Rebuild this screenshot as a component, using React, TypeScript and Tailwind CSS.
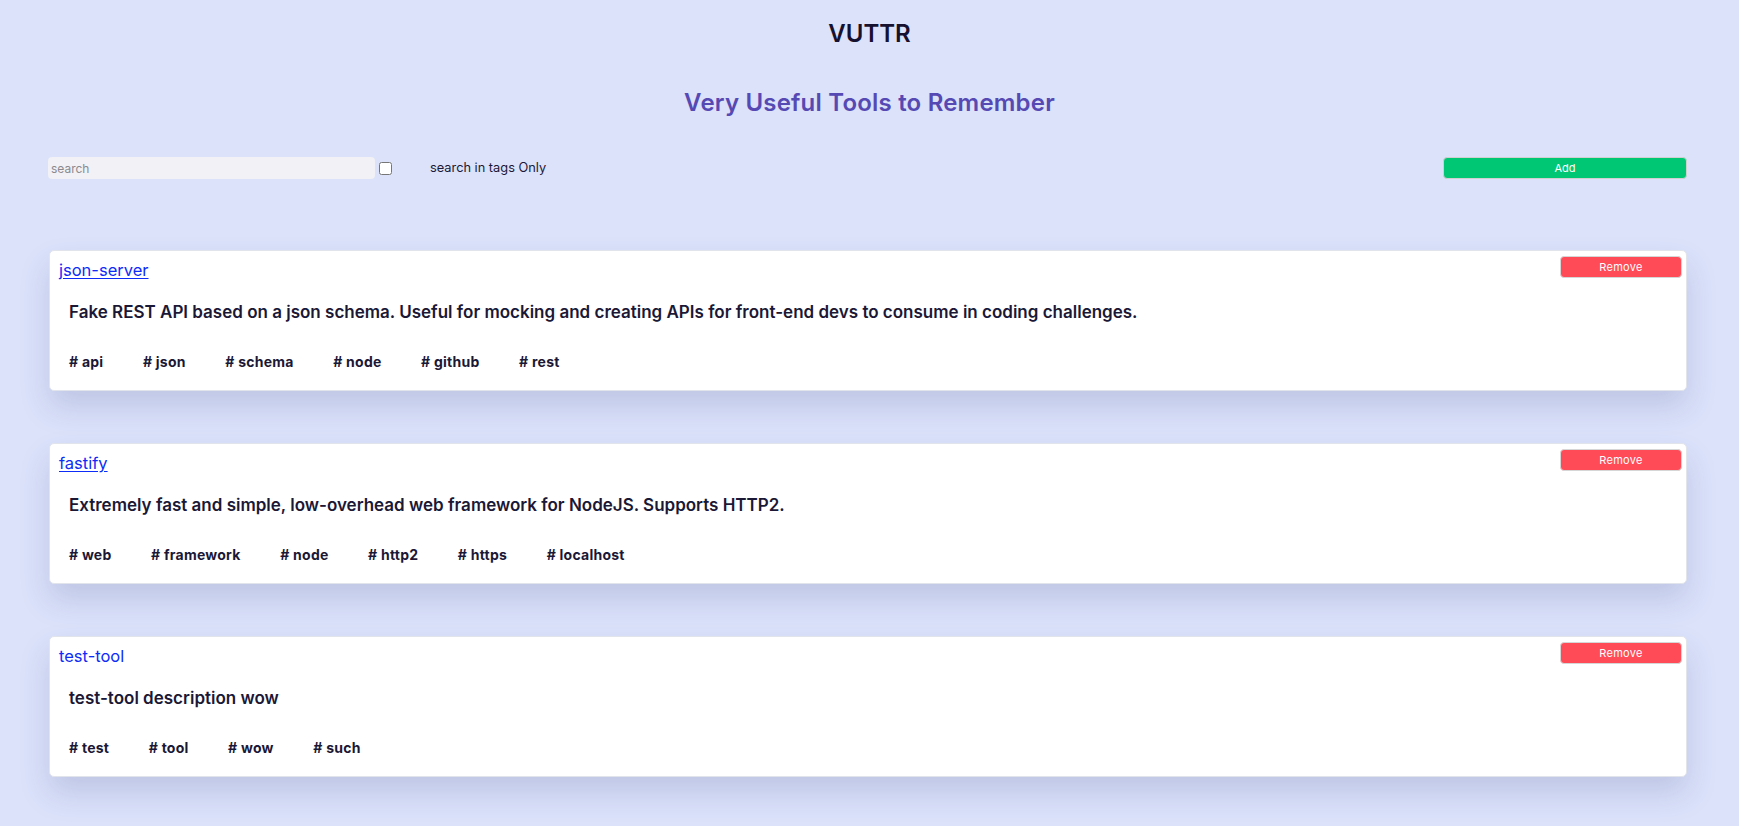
import React from "react";

type Tool = { title: string; underline: boolean; description: string; tags: string[] };

const tools: Tool[] = [
  {
    title: "json-server",
    underline: true,
    description:
      "Fake REST API based on a json schema. Useful for mocking and creating APIs for front-end devs to consume in coding challenges.",
    tags: ["api", "json", "schema", "node", "github", "rest"],
  },
  {
    title: "fastify",
    underline: true,
    description: "Extremely fast and simple, low-overhead web framework for NodeJS. Supports HTTP2.",
    tags: ["web", "framework", "node", "http2", "https", "localhost"],
  },
  {
    title: "test-tool",
    underline: false,
    description: "test-tool description wow",
    tags: ["test", "tool", "wow", "such"],
  },
];

function Card({ tool }: { tool: Tool }) {
  return (
    <div className="h-[141px] bg-white border border-[#e2e4ec] rounded-[5px] shadow-[0_16px_30px_rgba(50,60,130,0.17)] pt-[5px] pl-[9px] pr-[4px]">
      <div className="flex justify-between items-start">
        <a
          href="#"
          className={
            "mt-[4px] text-[16.5px] leading-[20px] text-[#0d2cf7] underline-offset-[2px] " +
            (tool.underline ? "underline" : "no-underline")
          }
        >
          {tool.title}
        </a>
        <button className="w-[122px] h-[22px] bg-[#ff4a57] border border-[#d6d6d6] rounded-[4px] text-white text-[11px] tracking-[0.3px] leading-none">
          Remove
        </button>
      </div>
      <p className="mt-[20px] ml-[10px] text-[17px] leading-[24px] font-semibold text-[#1b1836]">
        {tool.description}
      </p>
      <div className="mt-[28px] ml-[10px] flex gap-[39.5px] text-[14px] tracking-[0.25px] leading-[20px] font-bold text-[#1b1836]">
        {tool.tags.map((t) => (
          <span key={t}># {t}</span>
        ))}
      </div>
    </div>
  );
}

export default function App() {
  return (
    <div className="min-h-screen bg-[#dbe2fa] font-['Inter','Noto_Sans',sans-serif] text-[#1b1836] pb-[50px]">
      <h1 className="pt-[19px] text-center text-[24px] leading-[30px] font-semibold text-[#16112f]">VUTTR</h1>
      <h2 className="mt-[39px] text-center text-[24px] tracking-[0.2px] leading-[30px] font-semibold text-[#5649b3]">
        Very Useful Tools to Remember
      </h2>
      <div className="mt-[39px] ml-[48px] mr-[52px] flex items-center h-[22px]">
        <input
          className="w-[327px] h-[22px] bg-[#f1f1f6] rounded-[4px] text-[12px] pl-[3px] outline-none placeholder:text-[#8a8a8f]"
          placeholder="search"
        />
        <input type="checkbox" className="ml-[4px] w-[13px] h-[13px]" />
        <span className="ml-[38px] text-[12.8px] text-[#1b1836]">search in tags Only</span>
        <button className="ml-auto w-[244px] h-[22px] bg-[#00c774] border border-[#d0d0d0] rounded-[4px] text-white text-[11px] leading-none">
          Add
        </button>
      </div>
      <div className="mt-[71px] ml-[49px] w-[1638px] flex flex-col gap-[52px]">
        {tools.map((t) => (
          <Card key={t.title} tool={t} />
        ))}
      </div>
    </div>
  );
}
